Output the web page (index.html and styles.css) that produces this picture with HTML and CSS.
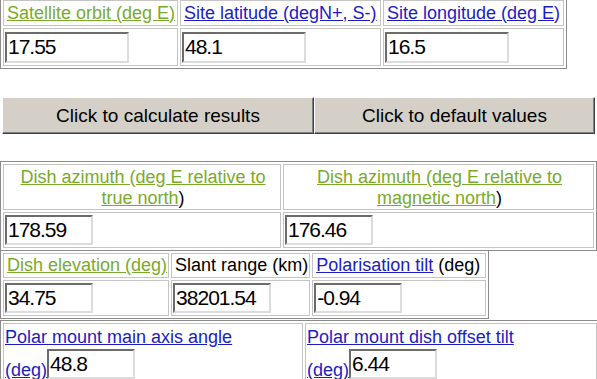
FILE: index.html
```html
<!DOCTYPE html>
<html lang="en">
<head>
    <meta charset="UTF-8">
    <title>Dish pointing</title>
    <link rel="stylesheet" href="styles.css">
</head>
<body>
    <table class="grid top">
        <tr>
            <td class="c1"><a class="green" href="">Satellite orbit (deg E)</a></td>
            <td class="c2"><a class="blue" href="">Site latitude (degN+, S-)</a></td>
            <td class="c3"><a class="blue" href="">Site longitude (deg E)</a></td>
        </tr>
        <tr>
            <td><input class="big" type="text" value="17.55"></td>
            <td><input class="big" type="text" value="48.1"></td>
            <td><input class="big" type="text" value="16.5"></td>
        </tr>
    </table>

    <div class="buttons">
        <button class="btn b1">Click to calculate results</button>
        <button class="btn b2">Click to default values</button>
    </div>

    <table class="grid azi">
        <tr>
            <td class="head a1"><a class="green" href="">Dish azimuth (deg E relative to true north</a>)</td>
            <td class="head a2"><a class="green" href="">Dish azimuth (deg E relative to magnetic north</a>)</td>
        </tr>
        <tr>
            <td class="val"><input class="mid" type="text" value="178.59"></td>
            <td class="val"><input class="mid" type="text" value="176.46"></td>
        </tr>
    </table>

    <table class="grid elev">
        <tr>
            <td class="label">
                <a class="green" href="">Dish elevation (deg)</a>
            </td>
            <td class="label">Slant range (km)</td>
            <td class="label e3"><a class="blue" href="">Polarisation tilt</a> (deg)</td>
        </tr>
        <tr>
            <td class="val"><input class="mid" type="text" value="34.75"></td>
            <td class="val"><input class="mid wide" type="text" value="38201.54"></td>
            <td class="val"><input class="mid" type="text" value="-0.94"></td>
        </tr>
    </table>

    <table class="grid polar">
        <tr>
            <td class="p1"><a class="blue" href="">Polar mount main axis angle<br>(deg)</a><input class="mid" type="text" value="48.8"></td>
            <td class="p2"><a class="blue" href="">Polar mount dish offset tilt<br>(deg)</a><input class="mid" type="text" value="6.44"></td>
        </tr>
    </table>
</body>
</html>
```

FILE: styles.css
```css
body{
    margin: 0;
    background: #ffffff;
    font-family: "Liberation Sans", Arial, sans-serif;
    font-size: 18px;
    color: #000000;
}

.grid{
    border-collapse: separate;
    border-spacing: 2px;
    border: 1px solid #8c8c8c;
}
.grid td{
    border: 1px solid #c4c4c4;
    padding: 1px 1px 1px 3px;
    vertical-align: middle;
}

a{
    text-decoration: underline;
}
.green{
    color: #7aaa2a;
}
.blue{
    color: #1c1cc4;
}

input{
    box-sizing: border-box;
    font-family: "Liberation Sans", Arial, sans-serif;
    letter-spacing: -1px;
    color: #000000;
    background: #ffffff;
    border: 2px solid;
    border-color: #6c6c6c #dcdcdc #dcdcdc #6c6c6c;
    padding: 0 1px;
    margin: 0;
    vertical-align: bottom;
}
.big{
    width: 124px;
    height: 31px;
    font-size: 21px;
}
.mid{
    width: 88px;
    height: 30px;
    font-size: 21px;
}
.wide{
    width: 98px;
}
.grid .val{
    padding-left: 1px;
}

/* top table */
.top{
    margin-top: -3px;
    width: 567px;
}
.top td{
    height: 22px;
    white-space: nowrap;
}
.top tr + tr td{
    height: 34px;
    padding-left: 1px;
}
.c1{ width: 169px; }
.c2{ width: 195px; }

/* buttons */
.buttons{
    display: flex;
    margin: 28px 0 0 2px;
    width: 593px;
}
.btn{
    height: 37px;
    background: #d4d0c8;
    font-family: "Liberation Sans", Arial, sans-serif;
    font-size: 19px;
    color: #000000;
    border: 1px solid;
    border-color: #ffffff #404040 #404040 #ffffff;
    box-shadow: inset -1px -1px 0 #808080;
    padding: 0;
}
.b1{ width: 312px; }
.b2{ width: 281px; }

/* azimuth */
.azi{
    margin-top: 27px;
    width: 597px;
}
.grid .head{
    text-align: center;
    line-height: 21px;
    height: 42px;
    padding-top: 2px;
    padding-bottom: 0;
}
.azi .val{
    height: 32px;
}
.a1{ width: 272px; }

/* elevation */
.elev{
    margin-top: -1px;
}
.elev .label{
    height: 21px;
    white-space: nowrap;
}
.grid .e3{
    padding-right: 5px;
}
.elev .val{
    height: 32px;
}

/* polar */
.polar{
    margin-top: 1px;
    width: 600px;
}
.polar td{
    vertical-align: top;
    line-height: 24px;
    padding-left: 1px;
}
.polar input{
    vertical-align: 5px;
}
.p1{ width: 296px; }
```
